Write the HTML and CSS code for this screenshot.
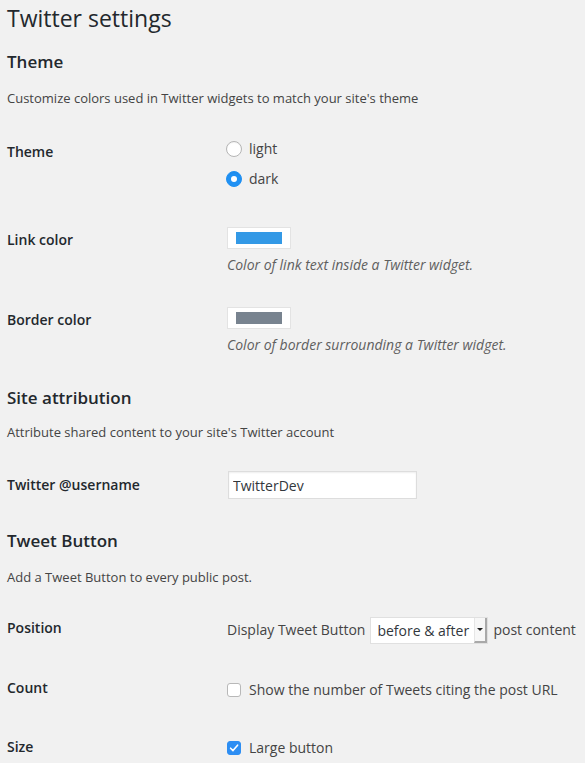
FILE: index.html
```html
<!DOCTYPE html>
<html lang="en">
<head>
<meta charset="utf-8">
<title>Twitter settings</title>
<link rel="stylesheet" href="styles.css">
</head>
<body>
<div class="wrap">
  <h1>Twitter settings</h1>

  <h2 class="sec sec-first">Theme</h2>
  <p class="desc">Customize colors used in Twitter widgets to match your site's theme</p>

  <div class="row row-theme">
    <div class="th">Theme</div>
    <div class="td">
      <label class="radio-opt"><span class="radio"></span>light</label>
      <label class="radio-opt"><span class="radio checked"></span>dark</label>
    </div>
  </div>

  <div class="row row-color">
    <div class="th">Link color</div>
    <div class="td">
      <span class="swatch-box"><span class="swatch swatch-link"></span></span>
      <p class="field-desc">Color of link text inside a Twitter widget.</p>
    </div>
  </div>

  <div class="row row-color">
    <div class="th">Border color</div>
    <div class="td">
      <span class="swatch-box"><span class="swatch swatch-border"></span></span>
      <p class="field-desc">Color of border surrounding a Twitter widget.</p>
    </div>
  </div>

  <h2 class="sec sec-next">Site attribution</h2>
  <p class="desc desc-tight">Attribute shared content to your site's Twitter account</p>

  <div class="row row-user">
    <div class="th">Twitter @username</div>
    <div class="td">
      <input class="text-input" type="text" value="TwitterDev">
    </div>
  </div>

  <h2 class="sec sec-next2">Tweet Button</h2>
  <p class="desc">Add a Tweet Button to every public post.</p>

  <div class="row row-pos">
    <div class="th">Position</div>
    <div class="td td-inline">
      <span>Display Tweet Button</span>
      <span class="select"><span class="select-value">before &amp; after</span><span class="select-btn"><span class="caret"></span></span></span>
      <span>post content</span>
    </div>
  </div>

  <div class="row row-count">
    <div class="th">Count</div>
    <div class="td">
      <label class="check-opt"><span class="checkbox"></span>Show the number of Tweets citing the post URL</label>
    </div>
  </div>

  <div class="row row-size">
    <div class="th">Size</div>
    <div class="td">
      <label class="check-opt"><span class="checkbox checked"><svg viewBox="0 0 14 14" width="14" height="14"><path d="M3.6 7.2 L6 9.6 L10.6 4.2" fill="none" stroke="#fff" stroke-width="1.6" stroke-linecap="round" stroke-linejoin="round"/></svg></span>Large button</label>
    </div>
  </div>
</div>
</body>
</html>
```

FILE: styles.css
```css
html, body {
  margin: 0;
  padding: 0;
  background: #f1f1f1;
}

body {
  font-family: "Open Sans", "Liberation Sans", sans-serif;
  font-size: 13px;
  color: #444;
}

.wrap {
  padding: 4px 8px 0 7px;
}

h1 {
  margin: 0;
  font-size: 23px;
  font-weight: 400;
  line-height: 29px;
  color: #23282d;
}

.sec {
  margin: 0;
  font-size: 17px;
  font-weight: 600;
  line-height: 23px;
  color: #23282d;
}

.sec-first { margin-top: 17px; }
.sec-next { margin-top: 32px; }
.sec-next2 { margin-top: 30px; }

.desc {
  margin: 16px 0 0;
  line-height: 18px;
  color: #444;
}

.desc-tight { margin-top: 14px; }

.row {
  display: grid;
  grid-template-columns: 220px 1fr;
  align-items: start;
}

.th {
  font-size: 14px;
  font-weight: 600;
  line-height: 18px;
  color: #23282d;
}

.td {
  font-size: 14px;
  line-height: 18px;
}

/* Theme radios */
.row-theme { margin-top: 27px; }
.row-theme .th { padding-top: 9px; }

.radio-opt {
  display: flex;
  align-items: center;
  gap: 7px;
  height: 30px;
  color: #444;
}

.radio {
  box-sizing: border-box;
  width: 16px;
  height: 16px;
  margin-left: -1px;
  border-radius: 50%;
  border: 1px solid #b5b5b5;
  background: #fff;
  box-shadow: inset 0 1px 1px rgba(0, 0, 0, 0.05);
  position: relative;
}

.radio.checked {
  border-color: #2091f3;
  background: #2091f3;
}

.radio.checked::after {
  content: "";
  position: absolute;
  left: 4px;
  top: 4px;
  width: 6px;
  height: 6px;
  border-radius: 50%;
  background: #fff;
}

/* Colour pickers */
.row-color { margin-top: 33px; }
.row-color .th { padding-top: 4px; }

.swatch-box {
  box-sizing: border-box;
  display: flex;
  align-items: center;
  justify-content: center;
  width: 64px;
  height: 22px;
  background: #fff;
  border: 1px solid #e3e3e3;
}

.swatch {
  display: block;
  width: 46px;
  height: 12px;
}

.swatch-link { background: #3399e6; }
.swatch-border { background: #78838f; }

.field-desc {
  margin: 7px 0 0;
  font-style: italic;
  line-height: 18px;
  color: #5f5f5f;
}

/* Username */
.row-user { margin-top: 30px; }
.row-user .th { padding-top: 5px; }

.text-input {
  box-sizing: border-box;
  display: block;
  width: 189px;
  height: 28px;
  margin: 0 0 0 1px;
  padding: 0 4px;
  border: 1px solid #ddd;
  background: #fff;
  box-shadow: inset 0 1px 2px rgba(0, 0, 0, 0.07);
  font-family: "Open Sans", "Liberation Sans", sans-serif;
  font-size: 14px;
  line-height: 26px;
  color: #32373c;
  outline: none;
}

/* Position */
.row-pos { margin-top: 31px; }
.row-pos .th { padding-top: 2px; }

.td-inline {
  display: flex;
  align-items: center;
  gap: 5px;
  height: 26px;
  white-space: nowrap;
  color: #444;
}

.select {
  box-sizing: border-box;
  display: flex;
  align-items: stretch;
  width: 118px;
  height: 27px;
  background: #fff;
  border: 1px solid #e0e0e0;
}

.select-value {
  flex: 1;
  padding-left: 6px;
  font-size: 14px;
  line-height: 25px;
  color: #32373c;
}

.select-btn {
  box-sizing: border-box;
  width: 13px;
  display: flex;
  align-items: center;
  justify-content: center;
  border-left: 1px solid #e6e6e6;
  border-right: 2px solid #a9a9a9;
  border-bottom: 2px solid #a9a9a9;
  background: #f7f7f7;
}

.caret {
  width: 0;
  height: 0;
  border-left: 3px solid transparent;
  border-right: 3px solid transparent;
  border-top: 3px solid #222;
}

/* Checkboxes */
.row-count { margin-top: 35px; }
.row-count .th { padding-top: 1px; }
.row-count .td { padding-top: 3px; }

.row-size { margin-top: 38px; }
.row-size .th { padding-top: 1px; }
.row-size .td { padding-top: 2px; }

.check-opt {
  display: flex;
  align-items: center;
  gap: 8px;
  height: 18px;
  color: #444;
}

.checkbox {
  box-sizing: border-box;
  display: flex;
  align-items: center;
  justify-content: center;
  width: 14px;
  height: 14px;
  border-radius: 3px;
  border: 1px solid #b8b8b8;
  background: #fff;
}

.checkbox.checked {
  border-color: #2d8ef3;
  background: #2d8ef3;
}

.checkbox svg {
  display: block;
  flex: none;
}
```
